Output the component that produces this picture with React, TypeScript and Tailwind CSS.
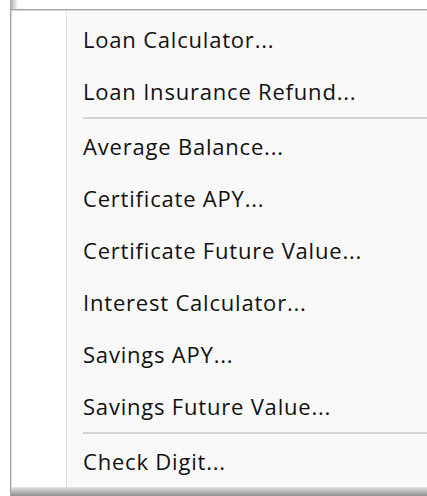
import React from 'react';

type Entry = { label: string } | { divider: true };

const entries: Entry[] = [
  { label: 'Loan Calculator...' },
  { label: 'Loan Insurance Refund...' },
  { divider: true },
  { label: 'Average Balance...' },
  { label: 'Certificate APY...' },
  { label: 'Certificate Future Value...' },
  { label: 'Interest Calculator...' },
  { label: 'Savings APY...' },
  { label: 'Savings Future Value...' },
  { divider: true },
  { label: 'Check Digit...' },
];

const MenuRow: React.FC<{ label: string }> = ({ label }) => (
  <div className="flex h-[52px] items-center pl-[15px]">
    <span className="text-[22px] leading-[52px] tracking-[0.8px] text-[#111] whitespace-nowrap">{label}</span>
  </div>
);

const MenuDivider: React.FC = () => (
  <div className="h-[3px] pl-[15px]">
    <div className="h-[2px] bg-[#d3d3d3]" />
  </div>
);

export default function App() {
  return (
    <div
      className="flex h-[496px] w-[427px] flex-col overflow-hidden bg-white pl-[10px]"
      style={{ fontFamily: '"Segoe UI", "Open Sans", "Noto Sans", sans-serif' }}
    >
      {/* bit of the parent frame peeking above the popup */}
      <div className="h-[9px] w-[8px] bg-gradient-to-r from-[#a8a8a8] to-white" />

      <div className="flex w-[520px] flex-col border-l border-t border-[#a3a3a3]">
        <div className="flex border-l border-t border-[#d8d8d8]">
          {/* icon gutter */}
          <div className="w-[54px] bg-white" />
          <div className="w-px bg-[#e2e2e2]" />
          <div className="w-px bg-white" />

          <div className="flex flex-1 flex-col bg-[#f9f9f9] pt-[2px]">
            {entries.map((e, i) =>
              'divider' in e ? <MenuDivider key={i} /> : <MenuRow key={i} label={e.label} />
            )}
          </div>
        </div>

        {/* drop shadow along the bottom edge */}
        <div className="h-[9px] bg-gradient-to-b from-[#e4e4e4] via-[#b9b9b9] to-[#8f8f8f]" />
      </div>
    </div>
  );
}
